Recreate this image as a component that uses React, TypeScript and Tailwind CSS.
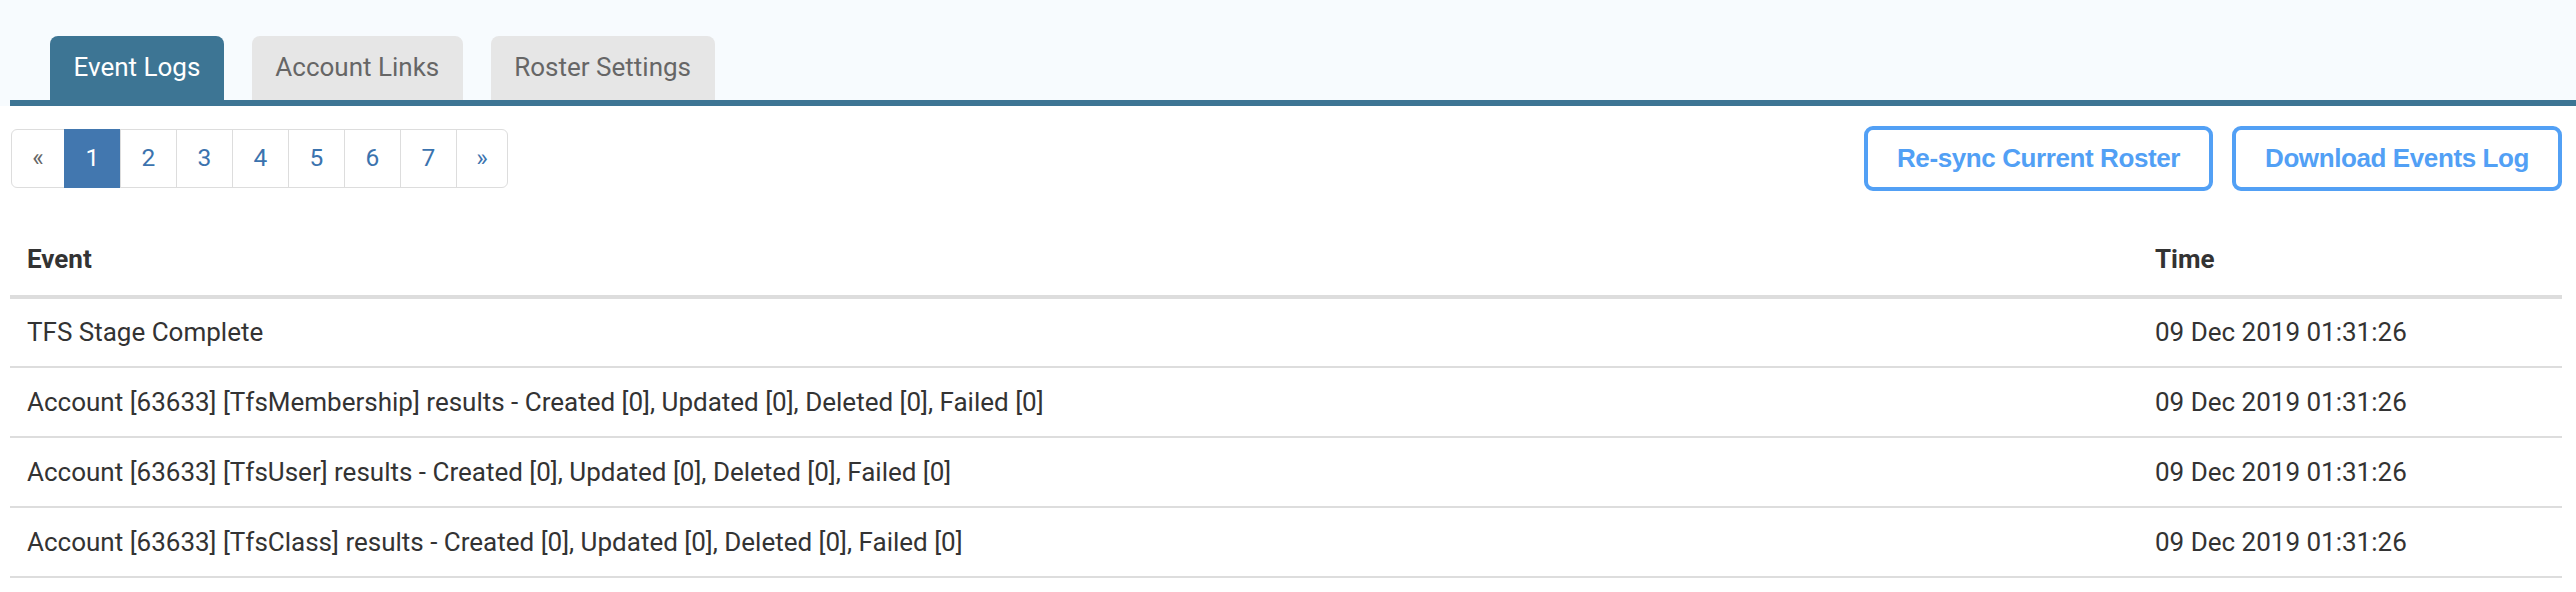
const tabs = [
  { label: "Event Logs", active: true },
  { label: "Account Links", active: false },
  { label: "Roster Settings", active: false },
];

const pages = ["1", "2", "3", "4", "5", "6", "7"];

const events = [
  "TFS Stage Complete",
  "Account [63633] [TfsMembership] results - Created [0], Updated [0], Deleted [0], Failed [0]",
  "Account [63633] [TfsUser] results - Created [0], Updated [0], Deleted [0], Failed [0]",
  "Account [63633] [TfsClass] results - Created [0], Updated [0], Deleted [0], Failed [0]",
];

const App = () => {
  return (
    <div className="min-h-screen bg-white font-['Roboto',sans-serif] text-[#333]">
      <div className="bg-[#f7fbfe] pt-[36px] pl-[10px]">
        <div className="flex gap-[28px] pl-[40px]">
          {tabs.map((tab) => (
            <div
              key={tab.label}
              className={
                tab.active
                  ? "flex h-[64px] items-center rounded-t-[8px] bg-[#3d7594] px-[23.5px] pb-[2px] text-[26px] text-white"
                  : "flex h-[64px] items-center rounded-t-[8px] bg-[#e6e6e6] px-[23.5px] pb-[2px] text-[26px] text-[#666]"
              }>
              {tab.label}
            </div>
          ))}
        </div>
        <div className="h-[6px] bg-[#3d7594]" />
      </div>

      <div className="pl-[10px] pr-[14px]">
        <div className="mt-[20px] flex h-[65px] items-center justify-between">
          <div className="ml-px flex h-[59px] text-[24.5px]">
            <div className="flex w-[54px] items-center justify-center rounded-l-[6px] border border-[#ddd] text-[#666]">
              «
            </div>
            {pages.map((p) => (
              <div
                key={p}
                className={
                  p === "1"
                    ? "-ml-px flex w-[57px] items-center justify-center border border-[#4277af] bg-[#4277af] text-white"
                    : "-ml-px flex w-[57px] items-center justify-center border border-[#ddd] text-[#3b73ae]"
                }>
                {p}
              </div>
            ))}
            <div className="-ml-px flex w-[52px] items-center justify-center rounded-r-[6px] border border-[#ddd] text-[#3b73ae]">
              »
            </div>
          </div>

          <div className="flex gap-[19px] font-['Liberation_Sans',Arial,sans-serif] text-[26px] font-bold tracking-[-0.4px] text-[#52a0f5]">
            <button className="h-[65px] w-[349px] rounded-[9px] border-[4px] border-[#52a0f5] bg-white">
              Re-sync Current Roster
            </button>
            <button className="h-[65px] w-[330px] rounded-[9px] border-[4px] border-[#52a0f5] bg-white">
              Download Events Log
            </button>
          </div>
        </div>

        <table className="mt-[33px] w-full table-fixed border-collapse text-[26px]">
          <colgroup>
            <col />
            <col className="w-[424px]" />
          </colgroup>
          <thead>
            <tr className="h-[73px] border-b-[4px] border-[#ddd]">
              <th className="px-[17px] text-left font-bold">Event</th>
              <th className="px-[17px] text-left font-bold">Time</th>
            </tr>
          </thead>
          <tbody>
            {events.map((ev, i) => (
              <tr key={i} className="h-[70px] border-b-[2px] border-[#ddd]">
                <td className="px-[17px]">{ev}</td>
                <td className="px-[17px]">09 Dec 2019 01:31:26</td>
              </tr>
            ))}
          </tbody>
        </table>
      </div>
    </div>
  );
};

export default App;
